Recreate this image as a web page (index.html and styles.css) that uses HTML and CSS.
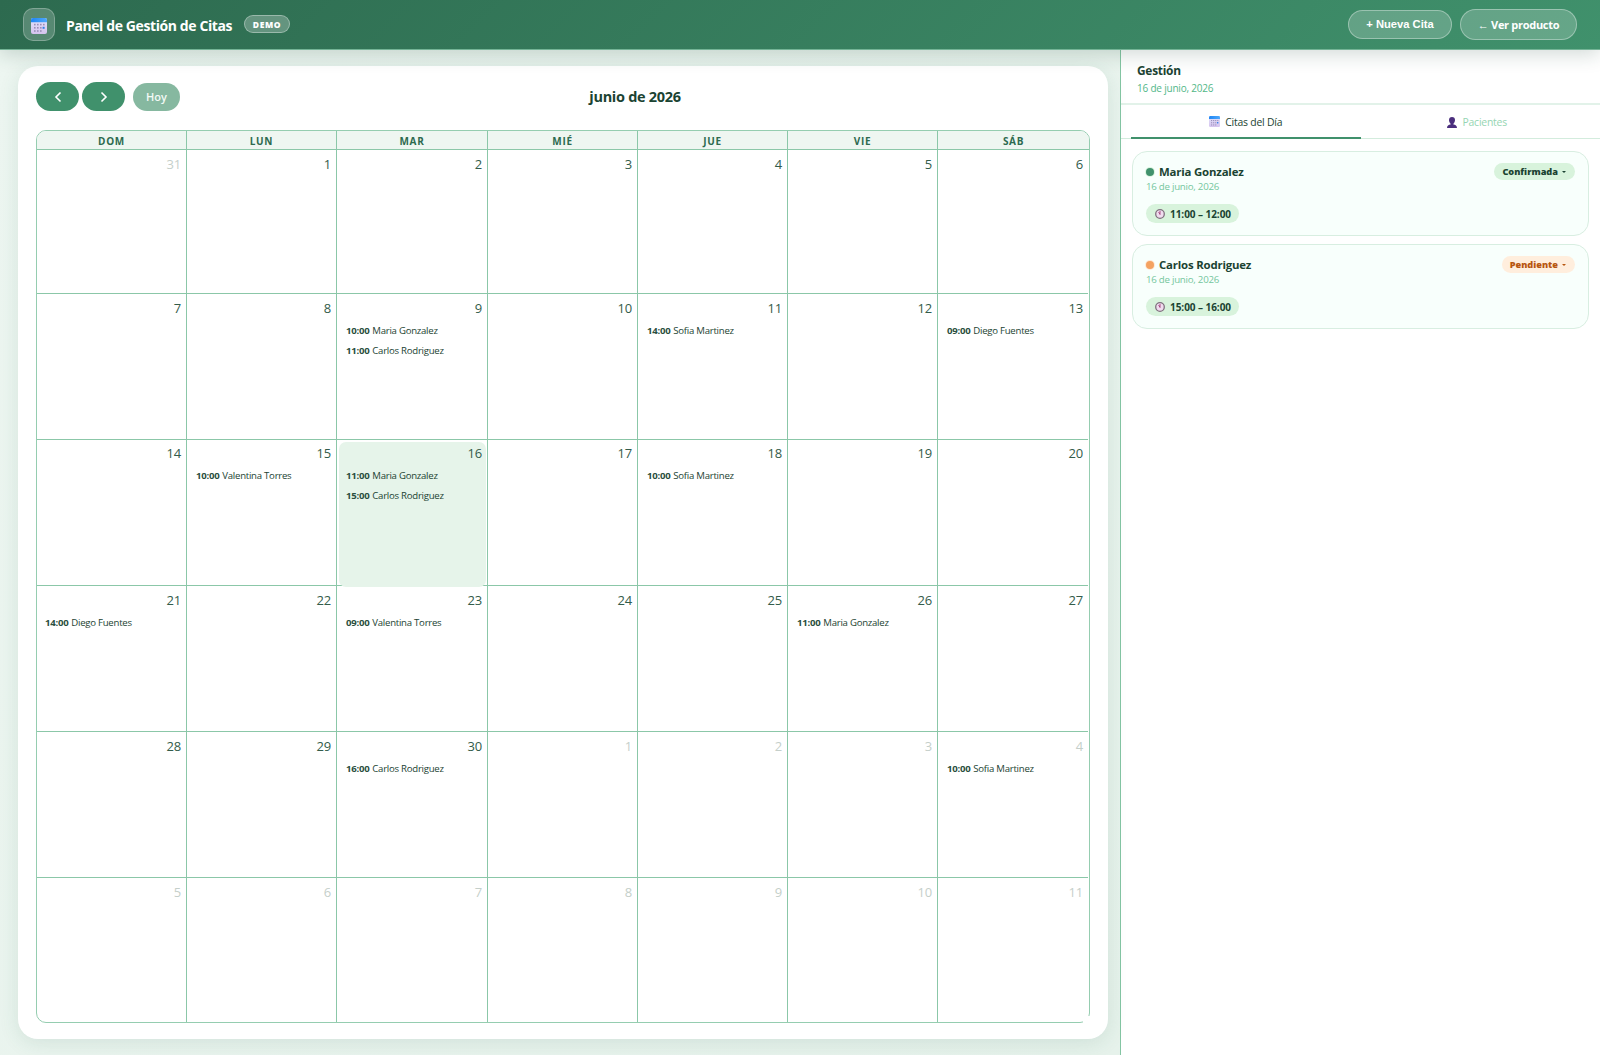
FILE: index.html
```html
<!DOCTYPE html>
<html lang="es">
<head>
    <meta charset="UTF-8">
    <title>Panel de Gestión de Citas</title>
    <link rel="stylesheet" href="styles.css">
</head>
<body>
    <!-- Shared icons -->
    <svg class="icon-defs" width="0" height="0">
        <defs>
            <linearGradient id="calTop" x1="0" x2="1">
                <stop offset="0" stop-color="#1f86f5"/>
                <stop offset="1" stop-color="#4fa8fb"/>
            </linearGradient>
            <linearGradient id="calBody" x1="0" y1="0" x2="0" y2="1">
                <stop offset="0" stop-color="#e3e4fb"/>
                <stop offset="1" stop-color="#d5c3ee"/>
            </linearGradient>
        </defs>
        <symbol id="icon-calendar" viewBox="0 0 16 16">
            <rect x="0" y="0" width="16" height="16" rx="2" fill="url(#calBody)"/>
            <path d="M0 4.2V2a2 2 0 0 1 2-2h12a2 2 0 0 1 2 2v2.2z" fill="url(#calTop)"/>
            <g fill="#9a8fb8">
                <rect x="3" y="5.8" width="1.6" height="1.6"/><rect x="6" y="5.8" width="1.6" height="1.6"/><rect x="9" y="5.8" width="1.6" height="1.6"/><rect x="12" y="5.8" width="1.6" height="1.6"/>
                <rect x="3" y="9" width="1.6" height="1.6"/><rect x="6" y="9" width="1.6" height="1.6"/><rect x="9" y="9" width="1.6" height="1.6"/>
                <rect x="3" y="12.2" width="1.6" height="1.6"/><rect x="6" y="12.2" width="1.6" height="1.6"/><rect x="9" y="12.2" width="1.6" height="1.6"/>
            </g>
            <rect x="11.6" y="8.8" width="2" height="2" fill="#2f7fe8"/>
        </symbol>
        <symbol id="icon-person" viewBox="0 0 10 11">
            <path d="M5 0C3 0 2 1.3 2 3.1c0 1.5.6 2.9 1.6 3.7v.8C1.5 7.9 0 8.7 0 11h10c0-2.3-1.5-3.1-3.6-3.4v-.8C7.4 6 8 4.6 8 3.1 8 1.3 7 0 5 0z" fill="#4b2f7d"/>
        </symbol>
        <symbol id="icon-clock" viewBox="0 0 10 10">
            <circle cx="5" cy="5" r="4.3" fill="#f0dcef" stroke="#80707f" stroke-width="1.3"/>
            <path d="M5 5.6V2M5 5.4L3.6 3" stroke="#a2407c" stroke-width=".9" fill="none"/>
        </symbol>
    </svg>

    <header class="topbar">
        <div class="logo"><svg width="16" height="16"><use href="#icon-calendar"/></svg></div>
        <h1>Panel de Gestión de Citas</h1>
        <span class="demo">DEMO</span>
        <div class="actions">
            <button type="button" class="top-button new">+ Nueva Cita</button>
            <a class="top-button back">← Ver producto</a>
        </div>
    </header>

    <div class="layout">
        <main class="calendar-area">
            <section class="calendar-card">
                <div class="toolbar">
                    <div class="nav">
                        <button type="button" class="arrow"><svg width="8" height="12" viewBox="0 0 8 12"><path d="M6.5 1.5L2 6l4.5 4.5"/></svg></button>
                        <button type="button" class="arrow"><svg width="8" height="12" viewBox="0 0 8 12"><path d="M1.5 1.5L6 6l-4.5 4.5"/></svg></button>
                        <button type="button" class="today-button">Hoy</button>
                    </div>
                    <h2>junio de 2026</h2>
                    <div></div>
                </div>

                <div class="calendar">
                    <div class="weekday">DOM</div>
                    <div class="weekday">LUN</div>
                    <div class="weekday">MAR</div>
                    <div class="weekday">MIÉ</div>
                    <div class="weekday">JUE</div>
                    <div class="weekday">VIE</div>
                    <div class="weekday">SÁB</div>

                    <div class="day other"><span class="num">31</span></div>
                    <div class="day"><span class="num">1</span></div>
                    <div class="day"><span class="num">2</span></div>
                    <div class="day"><span class="num">3</span></div>
                    <div class="day"><span class="num">4</span></div>
                    <div class="day"><span class="num">5</span></div>
                    <div class="day"><span class="num">6</span></div>

                    <div class="day"><span class="num">7</span></div>
                    <div class="day"><span class="num">8</span></div>
                    <div class="day">
                        <span class="num">9</span>
                        <div class="event"><b>10:00</b> <span>Maria Gonzalez</span></div>
                        <div class="event"><b>11:00</b> <span>Carlos Rodriguez</span></div>
                    </div>
                    <div class="day"><span class="num">10</span></div>
                    <div class="day">
                        <span class="num">11</span>
                        <div class="event"><b>14:00</b> <span>Sofia Martinez</span></div>
                    </div>
                    <div class="day"><span class="num">12</span></div>
                    <div class="day">
                        <span class="num">13</span>
                        <div class="event"><b>09:00</b> <span>Diego Fuentes</span></div>
                    </div>

                    <div class="day"><span class="num">14</span></div>
                    <div class="day">
                        <span class="num">15</span>
                        <div class="event"><b>10:00</b> <span>Valentina Torres</span></div>
                    </div>
                    <div class="day today">
                        <span class="num">16</span>
                        <div class="event"><b>11:00</b> <span>Maria Gonzalez</span></div>
                        <div class="event"><b>15:00</b> <span>Carlos Rodriguez</span></div>
                    </div>
                    <div class="day"><span class="num">17</span></div>
                    <div class="day">
                        <span class="num">18</span>
                        <div class="event"><b>10:00</b> <span>Sofia Martinez</span></div>
                    </div>
                    <div class="day"><span class="num">19</span></div>
                    <div class="day"><span class="num">20</span></div>

                    <div class="day">
                        <span class="num">21</span>
                        <div class="event"><b>14:00</b> <span>Diego Fuentes</span></div>
                    </div>
                    <div class="day"><span class="num">22</span></div>
                    <div class="day">
                        <span class="num">23</span>
                        <div class="event"><b>09:00</b> <span>Valentina Torres</span></div>
                    </div>
                    <div class="day"><span class="num">24</span></div>
                    <div class="day"><span class="num">25</span></div>
                    <div class="day">
                        <span class="num">26</span>
                        <div class="event"><b>11:00</b> <span>Maria Gonzalez</span></div>
                    </div>
                    <div class="day"><span class="num">27</span></div>

                    <div class="day"><span class="num">28</span></div>
                    <div class="day"><span class="num">29</span></div>
                    <div class="day">
                        <span class="num">30</span>
                        <div class="event"><b>16:00</b> <span>Carlos Rodriguez</span></div>
                    </div>
                    <div class="day other"><span class="num">1</span></div>
                    <div class="day other"><span class="num">2</span></div>
                    <div class="day other"><span class="num">3</span></div>
                    <div class="day other">
                        <span class="num">4</span>
                        <div class="event"><b>10:00</b> <span>Sofia Martinez</span></div>
                    </div>

                    <div class="day other"><span class="num">5</span></div>
                    <div class="day other"><span class="num">6</span></div>
                    <div class="day other"><span class="num">7</span></div>
                    <div class="day other"><span class="num">8</span></div>
                    <div class="day other"><span class="num">9</span></div>
                    <div class="day other"><span class="num">10</span></div>
                    <div class="day other"><span class="num">11</span></div>
                </div>
            </section>
        </main>

        <aside class="sidebar">
            <div class="side-header">
                <h3>Gestión</h3>
                <p>16 de junio, 2026</p>
            </div>
            <div class="tabs">
                <div class="tab active"><svg width="11" height="11"><use href="#icon-calendar"/></svg><span>Citas del Día</span></div>
                <div class="tab"><svg width="10" height="11"><use href="#icon-person"/></svg><span>Pacientes</span></div>
            </div>
            <div class="appointments">
                <article class="appointment">
                    <div class="row">
                        <span class="dot confirmed"></span>
                        <h4>Maria Gonzalez</h4>
                        <span class="status confirmed"><span>Confirmada</span><i></i></span>
                    </div>
                    <p class="date">16 de junio, 2026</p>
                    <div class="time"><svg width="10" height="10"><use href="#icon-clock"/></svg><span>11:00 – 12:00</span></div>
                </article>
                <article class="appointment">
                    <div class="row">
                        <span class="dot pending"></span>
                        <h4>Carlos Rodriguez</h4>
                        <span class="status pending"><span>Pendiente</span><i></i></span>
                    </div>
                    <p class="date">16 de junio, 2026</p>
                    <div class="time"><svg width="10" height="10"><use href="#icon-clock"/></svg><span>15:00 – 16:00</span></div>
                </article>
            </div>
        </aside>
    </div>
</body>
</html>
```
FILE: styles.css
```css
* {
    box-sizing: border-box;
}
body {
    margin: 0;
    height: 1055px;
    display: flex;
    flex-direction: column;
    overflow: hidden;
    font-family: "Segoe UI", "Open Sans", "Noto Sans", sans-serif;
    color: #1b4332;
    background: #e8f3ed;
}
h1, h2, h3, h4, p {
    margin: 0;
}
button {
    font-family: inherit;
    border: none;
    padding: 0;
}
.icon-defs {
    position: absolute;
}
/* Top bar */
.topbar {
    position: relative;
    z-index: 2;
    height: 50px;
    flex: none;
    display: flex;
    align-items: center;
    padding: 0 23px;
    background: linear-gradient(135deg, #2d6a4f, #40916c);
    border-bottom: 1px solid #74b496;
    box-shadow: 0 4px 20px rgba(27, 67, 50, 0.2);
    color: #fff;
}
.logo {
    width: 32px;
    height: 33px;
    display: flex;
    align-items: center;
    justify-content: center;
    padding-top: 2px;
    border-radius: 10px;
    background: rgba(255, 255, 255, 0.2);
    border: 1px solid rgba(255, 255, 255, 0.25);
}
.topbar h1 {
    margin-left: 11px;
    padding-top: 2px;
    width: 166px;
    font-size: 14px;
    letter-spacing: -0.4px;
    white-space: nowrap;
}
.demo {
    margin-left: 12px;
    margin-top: -2px;
    width: 46px;
    height: 18px;
    line-height: 17px;
    text-align: center;
    font-size: 8.5px;
    font-weight: 800;
    letter-spacing: 0.6px;
    border-radius: 9px;
    background: rgba(255, 255, 255, 0.25);
    border: 1px solid rgba(255, 255, 255, 0.35);
}
.actions {
    margin-left: auto;
    display: flex;
    align-items: center;
    gap: 8px;
}
.top-button {
    display: flex;
    align-items: center;
    justify-content: center;
    color: #fff;
    font-weight: 700;
    white-space: nowrap;
    border-radius: 16px;
    background: rgba(255, 255, 255, 0.2);
    border: 1px solid rgba(255, 255, 255, 0.35);
}
.new {
    width: 104px;
    height: 29px;
    padding-bottom: 1px;
    font-family: "Liberation Sans", Arial, sans-serif;
    font-size: 11.2px;
}
.back {
    width: 117px;
    height: 31px;
    font-size: 11px;
    letter-spacing: -0.3px;
}
/* Page layout */
.layout {
    flex: 1;
    display: flex;
    min-height: 0;
}
.calendar-area {
    width: 1120px;
    padding: 16px 12.5px 16px 18px;
    background: linear-gradient(135deg, #edf6f1, #e6f2eb);
}
.calendar-card {
    position: relative;
    height: 100%;
    display: flex;
    flex-direction: column;
    padding: 16px 17.5px 16px 18px;
    border-radius: 20px;
    background: #fff;
    box-shadow: 0 4px 20px rgba(45, 106, 79, 0.12);
}
/* open corner at the end of the grid */
.calendar-card::after {
    content: "";
    position: absolute;
    right: 16.5px;
    bottom: 15px;
    width: 8px;
    height: 8px;
    background: #fff;
}
.toolbar {
    display: flex;
    justify-content: space-between;
    align-items: center;
    height: 29px;
    margin-bottom: 19px;
}
.toolbar h2 {
    font-size: 14.5px;
    letter-spacing: -0.3px;
}
.nav {
    display: flex;
    align-items: center;
}
.arrow {
    width: 43px;
    height: 29px;
    display: flex;
    align-items: center;
    justify-content: center;
    margin-right: 3px;
    border-radius: 15px;
    background: #40916c;
}
.arrow path {
    fill: none;
    stroke: #fff;
    stroke-width: 1.6;
}
.today-button {
    width: 47px;
    height: 28px;
    margin-left: 5px;
    border-radius: 14px;
    background: #86b8a0;
    color: #f3faf6;
    font-size: 11px;
    font-weight: 600;
}
/* Month grid */
.calendar {
    flex: 1;
    display: grid;
    grid-template-columns: 150px 150px 151px 150px 150px 150px 1fr;
    grid-template-rows: 19px 144px 146px 146px 146px 146px 1fr;
    border: 1px solid #95cdb0;
    border-radius: 10px;
    overflow: hidden;
}
.weekday {
    border-right: 1px solid #8bc7a8;
    border-bottom: 1px solid #8bc7a8;
    background: #eef6f1;
    color: #2d6a4f;
    font-size: 10px;
    line-height: 21px;
    font-weight: 700;
    letter-spacing: 0.7px;
    text-align: center;
}
.day {
    display: flex;
    flex-direction: column;
    padding: 5px 5px 0 9px;
    border-right: 1px solid #8bc7a8;
    border-bottom: 1px solid #8bc7a8;
}
.weekday:nth-child(7n), .day:nth-child(7n) {
    border-right: none;
}
.day:nth-child(7n) {
    margin-right: 1px;
}
.day:nth-child(7n+1) {
    padding-left: 8px;
}
.day:nth-child(n+43) {
    border-bottom: none;
}
.day:nth-child(n+22):nth-child(-n+28) {
    padding-top: 4px;
}
.num {
    align-self: flex-end;
    margin-bottom: 4px;
    font-size: 13px;
    line-height: 18px;
    letter-spacing: -0.2px;
    color: #335c4a;
}
.other .num {
    color: #c5cfca;
}
.today {
    position: relative;
    z-index: 0;
}
.today::before {
    content: "";
    position: absolute;
    z-index: -1;
    inset: 2px 1px -2px 2px;
    border-radius: 7px;
    background: #e6f4ea;
}
.event {
    height: 20.3px;
    line-height: 20px;
    font-size: 9.6px;
    letter-spacing: -0.25px;
    white-space: nowrap;
    color: #1b4332;
}
.event b {
    color: #2a4f40;
    margin-right: 0.6px;
}
.event span {
    font-weight: 500;
}
/* Side panel */
.sidebar {
    flex: 1;
    border-left: 1px solid #84c5a3;
    background: #fff;
}
.side-header {
    height: 55px;
    padding: 11px 16px 0;
    border-bottom: 2px solid #e2f2e9;
}
.side-header h3 {
    font-size: 11.9px;
    line-height: 18px;
    letter-spacing: -0.25px;
}
.side-header p {
    font-size: 10px;
    line-height: 18px;
    letter-spacing: -0.2px;
    color: #52b788;
}
.tabs {
    display: flex;
    height: 34px;
    padding: 0 10px;
    border-bottom: 1px solid #d3ecdd;
}
.tab {
    flex: 1 0 50%;
    height: 34px;
    display: flex;
    align-items: center;
    justify-content: center;
    gap: 5px;
    padding-left: 4px;
    font-size: 10.4px;
    font-weight: 500;
    letter-spacing: -0.2px;
    color: #95d5b2;
}
.tab.active {
    padding: 1px 0 0;
    color: #1b4332;
    border-bottom: 2px solid #40916c;
}
.appointments {
    display: flex;
    flex-direction: column;
    gap: 8px;
    padding: 12px 11px;
}
.appointment {
    height: 85px;
    padding: 10px 13px;
    border: 1px solid #d8eee1;
    border-radius: 15px;
    background: #f8fffc;
}
.row {
    display: flex;
    align-items: center;
    height: 18px;
}
.dot {
    width: 8px;
    height: 8px;
    margin-top: 1px;
    margin-right: 5px;
    border-radius: 50%;
    box-shadow: 0 0 0 1px rgba(216, 243, 220, 0.9);
}
.dot.confirmed {
    background: #40916c;
}
.dot.pending {
    background: #f4a261;
    box-shadow: 0 0 0 1px #ffe8d6;
}
.row h4 {
    font-size: 11.4px;
    letter-spacing: -0.18px;
}
.status {
    display: flex;
    align-items: center;
    height: 17px;
    margin-left: auto;
    padding: 0 9px 0 8px;
    border-radius: 9px;
    font-size: 9.2px;
    font-weight: 800;
}
.status i {
    margin-top: 1px;
    margin-left: 4px;
    border: 2px solid transparent;
    border-top: 2px solid;
    border-bottom: none;
}
.status.confirmed {
    background: #d8f3dc;
}
.status.pending {
    background: #ffeedd;
    color: #b8560f;
}
.date {
    font-size: 9.7px;
    line-height: 14px;
    letter-spacing: -0.25px;
    color: #74c69d;
}
.time {
    display: inline-flex;
    align-items: center;
    gap: 5px;
    height: 19px;
    margin-top: 10px;
    padding: 0 8px 0 9px;
    border-radius: 10px;
    background: #d8f3dc;
    font-size: 10px;
    font-weight: 700;
    letter-spacing: -0.05px;
}
```
